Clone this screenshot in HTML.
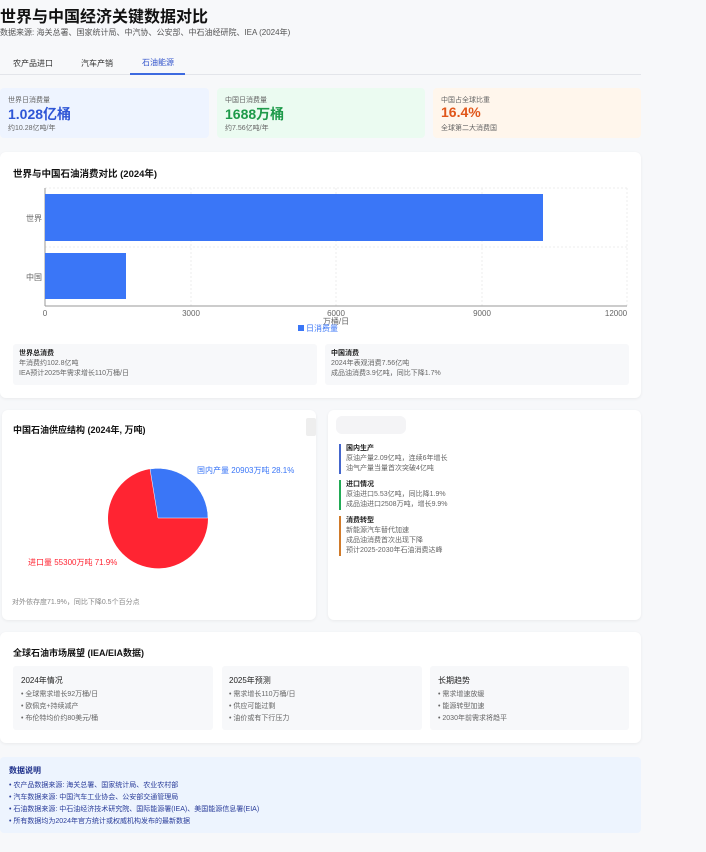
<!DOCTYPE html>
<html><head><meta charset="utf-8"><style>
*{margin:0;padding:0;box-sizing:border-box}
body{width:706px;height:852px;background:#f7f8fa;font-family:"Liberation Sans","Noto Sans CJK SC",sans-serif;color:#222;position:relative;overflow:hidden}
.a{position:absolute}
.card{position:absolute;background:#fff;border-radius:6px;box-shadow:0 1px 3px rgba(0,0,0,.06)}
.t{font-size:9px;font-weight:bold;color:#111}
.s{font-size:7px;color:#666;line-height:10px}
.box{position:absolute;background:#f7f8fa;border-radius:3px}
</style></head><body>
<div class="a" style="left:0;top:3px;font-size:16px;font-weight:bold;color:#111">世界与中国经济关键数据对比</div>
<div class="a" style="left:0;top:27px;font-size:8px;color:#555">数据来源: 海关总署、国家统计局、中汽协、公安部、中石油经研院、IEA (2024年)</div>
<div class="a" style="left:13px;top:58px;font-size:8px;color:#333">农产品进口</div>
<div class="a" style="left:81px;top:58px;font-size:8px;color:#333">汽车产销</div>
<div class="a" style="left:142px;top:57px;font-size:8px;color:#3355cc">石油能源</div>
<div class="a" style="left:0;top:74px;width:641px;height:1px;background:#e3e5ea"></div>
<div class="a" style="left:130px;top:73px;width:55px;height:2px;background:#3d6ae0"></div>

<div class="a" style="left:0;top:88px;width:209px;height:50px;background:#eef4ff;border-radius:4px"></div>
<div class="a" style="left:217px;top:88px;width:208px;height:50px;background:#ebfbf1;border-radius:4px"></div>
<div class="a" style="left:433px;top:88px;width:208px;height:50px;background:#fff6ec;border-radius:4px"></div>
<div class="a s" style="left:8px;top:96px">世界日消费量</div>
<div class="a" style="left:8px;top:104px;font-size:14px;font-weight:bold;color:#2f56d6">1.028亿桶</div>
<div class="a s" style="left:8px;top:124px">约10.28亿吨/年</div>
<div class="a s" style="left:225px;top:96px">中国日消费量</div>
<div class="a" style="left:225px;top:104px;font-size:14px;font-weight:bold;color:#1e9a4a">1688万桶</div>
<div class="a s" style="left:225px;top:124px">约7.56亿吨/年</div>
<div class="a s" style="left:441px;top:96px">中国占全球比重</div>
<div class="a" style="left:441px;top:104px;font-size:14px;font-weight:bold;color:#e0561a">16.4%</div>
<div class="a s" style="left:441px;top:124px">全球第二大消费国</div>

<div class="card" style="left:0;top:152px;width:641px;height:246px"></div>
<div class="a t" style="left:13px;top:166px;font-size:9.5px">世界与中国石油消费对比 (2024年)</div>
<svg class="a" style="left:0;top:180px" width="641" height="160" font-family="Liberation Sans,Noto Sans CJK SC,sans-serif">
<g stroke="#ececec" stroke-dasharray="2,2"><line x1="191" y1="8" x2="191" y2="126"/><line x1="336" y1="8" x2="336" y2="126"/><line x1="482" y1="8" x2="482" y2="126"/><line x1="627" y1="8" x2="627" y2="126"/><line x1="45" y1="8" x2="627" y2="8"/><line x1="45" y1="67" x2="627" y2="67"/></g>
<line x1="45" y1="8" x2="45" y2="126" stroke="#999"/><line x1="45" y1="126" x2="627" y2="126" stroke="#999"/>
<rect x="45" y="14" width="498" height="47" fill="#3a76f7"/>
<rect x="45" y="73" width="81" height="46" fill="#3a76f7"/>
<g font-size="8" fill="#666"><text x="42" y="41" text-anchor="end">世界</text><text x="42" y="100" text-anchor="end">中国</text>
<text x="45" y="136" text-anchor="middle">0</text><text x="191" y="136" text-anchor="middle">3000</text><text x="336" y="136" text-anchor="middle">6000</text><text x="482" y="136" text-anchor="middle">9000</text><text x="616" y="136" text-anchor="middle">12000</text>
<text x="336" y="144" text-anchor="middle">万桶/日</text></g>
<rect x="298" y="145" width="6" height="6" fill="#3a76f7"/><text x="306" y="151" font-size="8" fill="#3a76f7">日消费量</text>
</svg>
<div class="box" style="left:13px;top:344px;width:304px;height:41px"></div>
<div class="box" style="left:325px;top:344px;width:304px;height:41px"></div>
<div class="a" style="left:19px;top:349px"><div class="s" style="font-weight:bold;color:#222">世界总消费</div><div class="s">年消费约102.8亿吨</div><div class="s">IEA预计2025年需求增长110万桶/日</div></div>
<div class="a" style="left:331px;top:349px"><div class="s" style="font-weight:bold;color:#222">中国消费</div><div class="s">2024年表观消费7.56亿吨</div><div class="s">成品油消费3.9亿吨，同比下降1.7%</div></div>

<div class="card" style="left:2px;top:410px;width:314px;height:210px"></div>
<div class="a t" style="left:13px;top:423px">中国石油供应结构 (2024年, 万吨)</div>
<svg class="a" style="left:0;top:440px" width="316" height="150" font-family="Liberation Sans,Noto Sans CJK SC,sans-serif">
<path d="M158 78 L150 29 A50 50 0 1 0 208 78 Z" fill="#ff2432"/>
<path d="M158 78 L208 78 A50 50 0 0 0 150 29 Z" fill="#3a76f7" stroke="#fff" stroke-width=".5"/>
<text x="197" y="33" font-size="8" fill="#3a76f7">国内产量 20903万吨 28.1%</text>
<text x="28" y="125" font-size="8" fill="#ff2432">进口量 55300万吨 71.9%</text>
</svg>
<div class="a s" style="left:12px;top:598px;color:#888">对外依存度71.9%，同比下降0.5个百分点</div>

<div class="card" style="left:328px;top:410px;width:313px;height:210px"></div>
<div class="a" style="left:306px;top:418px;width:10px;height:18px;background:#eee;border-radius:2px"></div>
<div class="a" style="left:336px;top:416px;width:70px;height:18px;background:#f4f4f6;border-radius:6px"></div>
<div class="a" style="left:339px;top:444px;width:2px;height:30px;background:#4466cc"></div>
<div class="a" style="left:346px;top:444px"><div class="s" style="font-weight:bold;color:#222">国内生产</div><div class="s">原油产量2.09亿吨，连续6年增长</div><div class="s">油气产量当量首次突破4亿吨</div></div>
<div class="a" style="left:339px;top:480px;width:2px;height:30px;background:#22aa55"></div>
<div class="a" style="left:346px;top:480px"><div class="s" style="font-weight:bold;color:#222">进口情况</div><div class="s">原油进口5.53亿吨，同比降1.9%</div><div class="s">成品油进口2508万吨，增长9.9%</div></div>
<div class="a" style="left:339px;top:516px;width:2px;height:40px;background:#d07a2a"></div>
<div class="a" style="left:346px;top:516px"><div class="s" style="font-weight:bold;color:#222">消费转型</div><div class="s">新能源汽车替代加速</div><div class="s">成品油消费首次出现下降</div><div class="s">预计2025-2030年石油消费达峰</div></div>

<div class="card" style="left:0;top:632px;width:641px;height:111px"></div>
<div class="a t" style="left:13px;top:646px">全球石油市场展望 (IEA/EIA数据)</div>
<div class="box" style="left:13px;top:666px;width:200px;height:64px"></div>
<div class="box" style="left:222px;top:666px;width:200px;height:64px"></div>
<div class="box" style="left:430px;top:666px;width:199px;height:64px"></div>
<div class="a" style="left:21px;top:675px"><div style="font-size:8px;color:#222;margin-bottom:3px">2024年情况</div><div class="s" style="line-height:12px">• 全球需求增长92万桶/日<br>• 欧佩克+持续减产<br>• 布伦特均价约80美元/桶</div></div>
<div class="a" style="left:229px;top:675px"><div style="font-size:8px;color:#222;margin-bottom:3px">2025年预测</div><div class="s" style="line-height:12px">• 需求增长110万桶/日<br>• 供应可能过剩<br>• 油价或有下行压力</div></div>
<div class="a" style="left:438px;top:675px"><div style="font-size:8px;color:#222;margin-bottom:3px">长期趋势</div><div class="s" style="line-height:12px">• 需求增速放缓<br>• 能源转型加速<br>• 2030年前需求将趋平</div></div>

<div class="a" style="left:0;top:757px;width:641px;height:76px;background:#edf4fe;border-radius:4px"></div>
<div class="a" style="left:9px;top:765px;font-size:8px;font-weight:bold;color:#1d2f8a">数据说明</div>
<div class="a" style="left:9px;top:780px;font-size:7px;color:#2a3d9a;line-height:12px">• 农产品数据来源: 海关总署、国家统计局、农业农村部<br>• 汽车数据来源: 中国汽车工业协会、公安部交通管理局<br>• 石油数据来源: 中石油经济技术研究院、国际能源署(IEA)、美国能源信息署(EIA)<br>• 所有数据均为2024年官方统计或权威机构发布的最新数据</div>
</body></html>
